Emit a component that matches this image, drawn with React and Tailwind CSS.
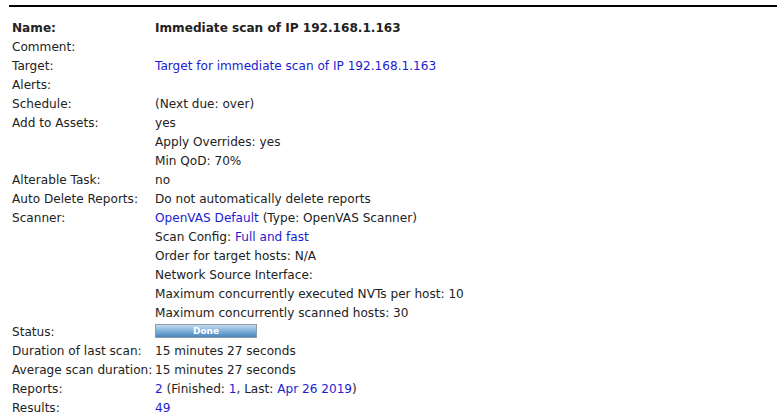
import React from 'react';

const A = ({ children }) => <span className="text-[#1c1cd0]">{children}</span>;

// filas de detalle de la tarea
const rows = [
    { label: 'Name:', value: ['Immediate scan of IP 192.168.1.163'], bold: true },
    { label: 'Comment:', value: [''] },
    { label: 'Target:', value: [<A>Target for immediate scan of IP 192.168.1.163</A>] },
    { label: 'Alerts:', value: [''] },
    { label: 'Schedule:', value: ['(Next due: over)'] },
    { label: 'Add to Assets:', value: ['yes', 'Apply Overrides: yes', 'Min QoD: 70%'] },
    { label: 'Alterable Task:', value: ['no'] },
    { label: 'Auto Delete Reports:', value: ['Do not automatically delete reports'] },
    {
        label: 'Scanner:',
        value: [
            <><A>OpenVAS Default</A> (Type: OpenVAS Scanner)</>,
            <>Scan Config: <A>Full and fast</A></>,
            'Order for target hosts: N/A',
            'Network Source Interface:',
            'Maximum concurrently executed NVTs per host: 10',
            'Maximum concurrently scanned hosts: 30',
        ],
    },
    {
        label: 'Status:',
        value: [
            <div className="h-[14px] w-[102px] border border-[#8c9cab] bg-gradient-to-b from-[#c4dcf0] via-[#7fb0db] to-[#4b86bd] flex items-center justify-center text-[9px] font-bold text-white leading-none mt-[1px]">
                Done
            </div>,
        ],
    },
    { label: 'Duration of last scan:', value: ['15 minutes 27 seconds'] },
    { label: 'Average scan duration:', value: ['15 minutes 27 seconds'] },
    { label: 'Reports:', value: [<><A>2</A> (Finished: <A>1</A>, Last: <A>Apr 26 2019</A>)</>] },
    { label: 'Results:', value: [<A>49</A>] },
];

export default function App() {
    return (
        <div className="w-[777px] h-[417px] overflow-hidden bg-white text-[#222] text-[12.1px] pt-[5px] pl-[9px]" style={{ fontFamily: '"DejaVu Sans", sans-serif' }}>
            <div className="border-t-2 border-black" />
            <div className="pt-[12px] pl-[3px]">
                {rows.map((r, i) => (
                    <div key={i} className="flex">
                        <div className={`w-[143px] shrink-0 h-[19px] leading-[19px] ${r.bold ? 'font-bold' : ''}`}>{r.label}</div>
                        <div className="flex flex-col">
                            {r.value.map((v, j) => (
                                <div key={j} className={`h-[19px] leading-[19px] whitespace-nowrap ${r.bold ? 'font-bold' : ''}`}>{v}</div>
                            ))}
                        </div>
                    </div>
                ))}
            </div>
        </div>
    );
}
